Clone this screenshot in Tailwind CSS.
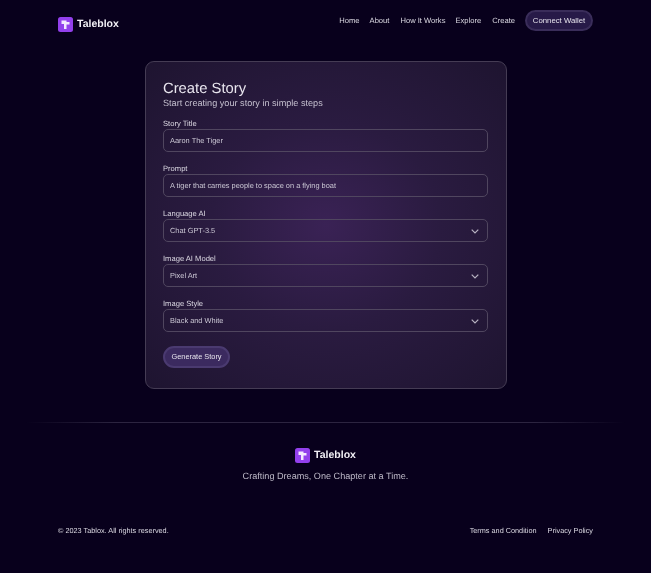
<!DOCTYPE html>
<html lang="en">
<head>
    <meta charset="UTF-8">
    <meta name="viewport" content="width=device-width, initial-scale=1.0">
    <title>Taleblox - Create Story</title>
    <script src="https://cdn.jsdelivr.net/npm/@tailwindcss/browser@4"></script>
</head>
<body class="bg-[#08001c] font-['Liberation_Sans',Arial,sans-serif] [text-rendering:geometricPrecision] text-[#d4d0dc] h-[573px] overflow-hidden">
    <!-- Header -->
    <header class="h-[61px] px-[58px] flex justify-between items-start will-change-transform">
        <div class="flex items-center gap-[4px] mt-[16px]">
            <svg class="w-[15px] h-[15px]" viewBox="0 0 15 15"><rect width="15" height="15" rx="2.5" fill="#9340ec"/><path d="M3.5 3.5h5v1.5h3v2.5h-3v4.5h-2.5v-5H3.5z" fill="#f3e8ff"/></svg>
            <span class="pt-px text-[10.5px] leading-[15px] font-bold text-[#f2f0f6]">Taleblox</span>
        </div>
        <nav class="flex items-center mt-[10px] text-[7.6px] text-[#dcd9e3]">
            <a class="mr-[10px] mt-px">Home</a>
            <a class="mr-[11px] mt-px">About</a>
            <a class="mr-[10px] mt-px">How It Works</a>
            <a class="mr-[11px] mt-px">Explore</a>
            <a class="mr-[10px] mt-px">Create</a>
            <button class="w-[68px] h-[21px] rounded-full bg-[#271a48] border-2 border-[#3a2d5a] text-[#e6e3ec] text-[7.75px]">Connect Wallet</button>
        </nav>
    </header>

    <!-- Create story card -->
    <main class="w-[362px] h-[328px] mx-auto px-[17px] pt-[19px] rounded-[9px] border border-[#453c54] will-change-transform bg-[radial-gradient(ellipse_at_center,#3a2255_0%,#2a1b40_45%,#1e1430_100%)]">
        <h1 class="text-[14.8px] leading-[17px] text-[#e8e5ee]">Create Story</h1>
        <p class="-mt-px text-[9.15px] leading-[12px] text-[#c4bfce]">Start creating your story in simple steps</p>

        <div class="mt-[9px] w-[325px] flex flex-col gap-[11px]">
            <div>
                <label class="block text-[7.6px] leading-[11px] text-[#dcd9e3]">Story Title</label>
                <div class="h-[23px] px-[6px] pt-px flex items-center rounded-[5px] border border-[#50465f] text-[7.4px] text-[#cbc7d4]">Aaron The Tiger</div>
            </div>
            <div>
                <label class="block text-[7.6px] leading-[11px] text-[#dcd9e3]">Prompt</label>
                <div class="h-[23px] px-[6px] pt-px flex items-center rounded-[5px] border border-[#50465f] text-[7.4px] text-[#cbc7d4]">A tiger that carries people to space on a flying boat</div>
            </div>
            <div>
                <label class="block text-[7.6px] leading-[11px] text-[#dcd9e3]">Language AI</label>
                <div class="h-[23px] px-[6px] pt-px flex items-center justify-between rounded-[5px] border border-[#50465f] text-[7.4px] text-[#cbc7d4]">
                    <span>Chat GPT-3.5</span>
                    <svg class="w-[8px] h-[5px] mr-[2px]" viewBox="0 0 8 5" fill="none" stroke="#b8b3c2" stroke-width="1.2"><path d="M.7.7L4 4 7.3.7"/></svg>
                </div>
            </div>
            <div>
                <label class="block text-[7.6px] leading-[11px] text-[#dcd9e3]">Image AI Model</label>
                <div class="h-[23px] px-[6px] pt-px flex items-center justify-between rounded-[5px] border border-[#50465f] text-[7.4px] text-[#cbc7d4]">
                    <span>Pixel Art</span>
                    <svg class="w-[8px] h-[5px] mr-[2px]" viewBox="0 0 8 5" fill="none" stroke="#b8b3c2" stroke-width="1.2"><path d="M.7.7L4 4 7.3.7"/></svg>
                </div>
            </div>
            <div>
                <label class="block text-[7.6px] leading-[11px] text-[#dcd9e3]">Image Style</label>
                <div class="h-[23px] px-[6px] pt-px flex items-center justify-between rounded-[5px] border border-[#50465f] text-[7.4px] text-[#cbc7d4]">
                    <span>Black and White</span>
                    <svg class="w-[8px] h-[5px] mr-[2px]" viewBox="0 0 8 5" fill="none" stroke="#b8b3c2" stroke-width="1.2"><path d="M.7.7L4 4 7.3.7"/></svg>
                </div>
            </div>
        </div>

        <button class="mt-[14px] w-[67px] h-[22px] rounded-full bg-[#3b2a5f] border-2 border-[#4a3a70] text-[#e6e3ec] text-[7.4px]">Generate Story</button>
    </main>

    <!-- Footer -->
    <footer class="will-change-transform">
        <div class="mt-[33px] mx-[26px] h-px bg-[linear-gradient(90deg,transparent,#2c2440_15%,#2c2440_85%,transparent)]"></div>
        <div class="mt-[24px] flex items-center justify-center gap-[4px]">
            <svg class="w-[15px] h-[15px]" viewBox="0 0 15 15"><rect width="15" height="15" rx="2.5" fill="#9340ec"/><path d="M3.5 3.5h5v1.5h3v2.5h-3v4.5h-2.5v-5H3.5z" fill="#f3e8ff"/></svg>
            <span class="pt-px text-[10.5px] leading-[15px] font-bold text-[#f2f0f6]">Taleblox</span>
        </div>
        <p class="mt-[6px] text-center text-[9.1px] leading-[14px] text-[#bdb8c7]">Crafting Dreams, One Chapter at a Time.</p>
        <div class="mt-[42px] px-[58px] flex justify-between text-[7.3px] leading-[12px] text-[#dcd9e3]">
            <span>© 2023 Tablox. All rights reserved.</span>
            <div class="flex gap-[11px]">
                <a>Terms and Condition</a>
                <a>Privacy Policy</a>
            </div>
        </div>
    </footer>
</body>
</html>
